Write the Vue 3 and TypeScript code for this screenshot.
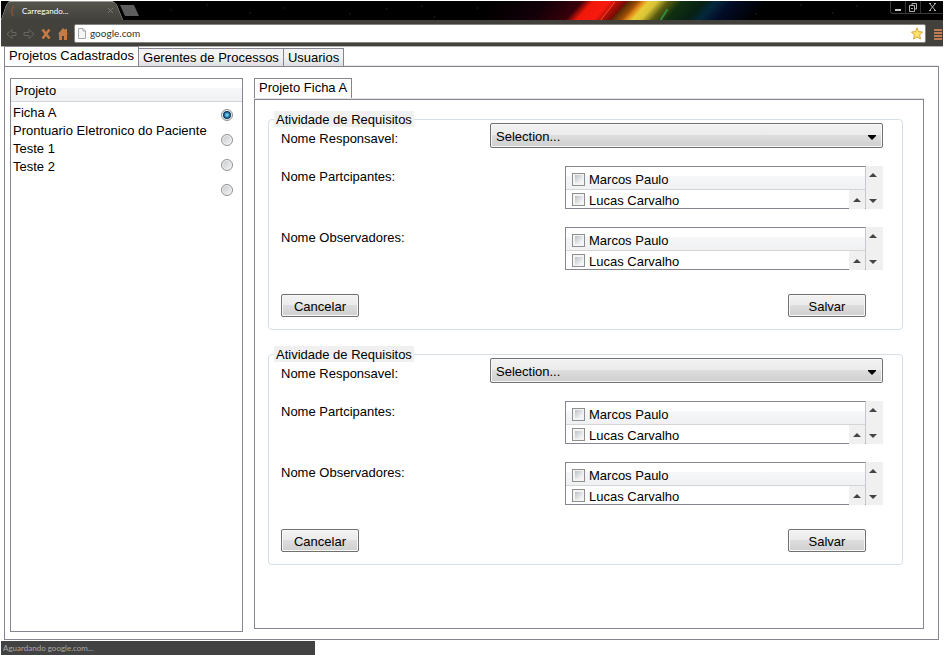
<script setup lang="ts">
import { ref } from 'vue'

const tabs = ['Projetos Cadastrados', 'Gerentes de Processos', 'Usuarios']
const activeTab = ref(0)

const projects = ['Ficha A', 'Prontuario Eletronico do Paciente', 'Teste 1', 'Teste 2']
const selectedProject = ref(0)

const lists = [
  { id: 'part', label: 'Nome Partcipantes:' },
  { id: 'obs', label: 'Nome Observadores:' },
]
const people = ['Marcos Paulo', 'Lucas Carvalho']
const address = ref('google.com')
</script>

<template>
  <div class="window">
    <header class="browser">
      <div class="titlebar">
        <svg class="art" viewBox="0 0 944 19" preserveAspectRatio="none" aria-hidden="true">
          <defs>
            <linearGradient id="glow" gradientUnits="userSpaceOnUse" x1="490" y1="0" x2="770" y2="0" gradientTransform="skewX(-42)">
              <stop offset="0" stop-color="#000" />
              <stop offset=".2" stop-color="#120008" />
              <stop offset=".33" stop-color="#38000a" />
              <stop offset=".37" stop-color="#f01808" />
              <stop offset=".43" stop-color="#f81a10" />
              <stop offset=".46" stop-color="#b01006" />
              <stop offset=".49" stop-color="#780c04" />
              <stop offset=".5" stop-color="#5c3006" />
              <stop offset=".53" stop-color="#9c4c08" />
              <stop offset=".55" stop-color="#e08a18" />
              <stop offset=".57" stop-color="#e8cc38" />
              <stop offset=".6" stop-color="#d8c434" />
              <stop offset=".64" stop-color="#5c5c10" />
              <stop offset=".69" stop-color="#103010" />
              <stop offset=".77" stop-color="#062014" />
              <stop offset=".81" stop-color="#04283c" />
              <stop offset=".87" stop-color="#020c28" />
              <stop offset="1" stop-color="#000" />
            </linearGradient>
          </defs>
          <path d="M490 0H770V19H474Z" fill="url(#glow)" />
          <path d="M615 1L601 19" stroke="#ff4a28" />
          <path d="M668 8L661 19" stroke="#2f8a40" stroke-width="2" />
          <path d="M170 9h1M206 4h1M249 12h1M283 7h1M349 13h1M386 8h1M421 5h1M434 16h1M477 7h1M756 13h1M801 4h1M833 12h1M857 5h1" stroke="#39433f" />
        </svg>
        <div class="page-tab">
          <svg width="8" height="12" viewBox="0 0 8 12" aria-hidden="true"><path d="M4 1Q0 5 3 11" fill="none" stroke="#8a5130" stroke-width="1.5" /></svg>
          <span>Carregando...</span>
          <button class="close" aria-label="Fechar aba">
            <svg width="5" height="5" viewBox="0 0 5 5"><path d="M0 0L5 5M5 0L0 5" stroke="#77756c" /></svg>
          </button>
          <svg class="edge" viewBox="0 0 122 19" aria-hidden="true"><path d="M0 19L5 4Q6 .5 9 .5H111Q114 .5 116 4L122 19" fill="none" stroke="#9a9992" /></svg>
        </div>
        <button class="new-tab" aria-label="Nova aba"></button>
        <div class="controls">
          <button aria-label="Minimizar"><svg width="7" height="9" viewBox="0 0 7 9"><path d="M0 7h6" stroke="#c8c8c8" stroke-width="2" /></svg></button>
          <button aria-label="Restaurar"><svg width="8" height="9" viewBox="0 0 8 9"><path d="M3 2V.5h4.500V6H6M.5 2.500h5v6h-5zM2 5.500h2" fill="none" stroke="#b0b0b0" /></svg></button>
          <button class="wide" aria-label="Fechar"><svg width="7" height="8" viewBox="0 0 7 8"><path d="M1 1L6 7M6 1L1 7M0 .5h2M5 .5h2M0 7.500h2M5 7.500h2" stroke="#b0b0b0" /></svg></button>
        </div>
      </div>
      <div class="toolbar">
        <button aria-label="Voltar"><svg width="12" height="12" viewBox="0 0 12 12"><path d="M6 1.500L1 6L6 10.500V7.500H10V4.500H6Z" fill="none" stroke="#68665e" /></svg></button>
        <button aria-label="Avançar"><svg width="12" height="12" viewBox="0 0 12 12"><path d="M6 1.500L11 6L6 10.500V7.500H1V4.500H6Z" fill="none" stroke="#68665e" /></svg></button>
        <button aria-label="Parar"><svg width="10" height="12" viewBox="0 0 10 12"><path d="M1.500 1.500L8.500 10.500M8.500 1.500L1.500 10.500" stroke="#c87a42" stroke-width="2.500" /></svg></button>
        <button aria-label="Início"><svg width="10" height="12" viewBox="0 0 10 12"><path d="M0 6L5 0L7 2V1H9V5L10 6H9V12H6V8H4V12H1V6Z" fill="#c87a42" /></svg></button>
        <div class="address">
          <svg width="8" height="11" viewBox="0 0 8 11" aria-hidden="true"><path d="M.5.5H5L7.500 3V10.500H.5ZM5 .5V3H7.500" fill="#f6f6f6" stroke="#a9a9a9" /></svg>
          <input v-model="address" type="text" aria-label="Endereço">
          <button aria-label="Favorito"><svg width="12" height="13" viewBox="0 0 12 13"><path d="M6 .8L7.600 4.600L11.500 5L8.600 8L9.500 12L6 10L2.500 12L3.400 8L.5 5L4.400 4.600Z" fill="#fbe36a" stroke="#d9a441" /></svg></button>
        </div>
        <button class="menu" aria-label="Menu"><svg width="8" height="11" viewBox="0 0 8 11"><path d="M0 1h8M0 4h8M0 7h8M0 10h8" stroke="#c07c50" stroke-width="2" /></svg></button>
      </div>
    </header>

    <nav class="tabs">
      <button v-for="(tab, i) in tabs" :key="tab" :class="{ active: i === activeTab }" @click="activeTab = i">{{ tab }}</button>
    </nav>

    <main class="panel">
      <section class="sidebar">
        <h2>Projeto</h2>
        <div class="projects">
          <div class="names">
            <label v-for="(name, i) in projects" :key="name" :for="`project-${i}`">{{ name }}</label>
          </div>
          <div class="radios">
            <input v-for="(name, i) in projects" :id="`project-${i}`" :key="name" v-model="selectedProject" type="radio" name="project" :value="i">
          </div>
        </div>
      </section>

      <section class="detail">
        <nav class="tabs inner"><button class="active">Projeto Ficha A</button></nav>
        <div class="detail-body">
          <fieldset v-for="n in 2" :key="n">
            <legend>Atividade de Requisitos</legend>
            <div class="form">
              <label class="lead" :for="`resp-${n}`">Nome Responsavel:</label>
              <div class="select">
                <select :id="`resp-${n}`"><option>Selection...</option></select>
                <svg width="8" height="5" viewBox="0 0 8 5" aria-hidden="true"><path d="M0 0H8V1L4 5L0 1Z" /></svg>
              </div>
              <template v-for="list in lists" :key="list.id">
                <span :id="`${list.id}-${n}`" class="caption">{{ list.label }}</span>
                <div class="listbox" role="group" :aria-labelledby="`${list.id}-${n}`">
                  <div class="rows">
                    <label v-for="person in people" :key="person"><input type="checkbox"><span>{{ person }}</span></label>
                    <button class="corner" aria-label="Subir"><svg width="8" height="4" viewBox="0 0 8 4"><path d="M0 4L4 0L8 4Z" fill="#444" /></svg></button>
                  </div>
                  <div class="scroll">
                    <button aria-label="Rolar para cima"><svg width="8" height="4" viewBox="0 0 8 4"><path d="M0 4L4 0L8 4Z" fill="#444" /></svg></button>
                    <button aria-label="Rolar para baixo"><svg width="8" height="4" viewBox="0 0 8 4"><path d="M0 0L4 4L8 0Z" fill="#444" /></svg></button>
                  </div>
                </div>
              </template>
            </div>
            <div class="actions">
              <button>Cancelar</button>
              <button>Salvar</button>
            </div>
          </fieldset>
        </div>
      </section>
    </main>

    <footer class="status">Aguardando google.com...</footer>
  </div>
</template>

<style>
body { background: #fff; }
</style>

<style scoped>
* { box-sizing: border-box; }
svg { display: block; flex: none; }
button { font: inherit; color: inherit; padding: 0; border: 0; background: none; }
.window { display: flex; flex-direction: column; min-height: 100vh; font: 13px/16px "Liberation Sans", Arial, sans-serif; color: #000; }

.browser { margin: 1px 1px 0; border-bottom: 1px solid #b5b5b3; }
.titlebar { position: relative; display: flex; height: 19px; background: #000; }
.art { position: absolute; inset: 0; width: 100%; height: 100%; }
.page-tab { position: relative; display: flex; align-items: center; gap: 4px; width: 122px; padding: 0 8px 0 9px; background: linear-gradient(#55544d, #42413c); clip-path: polygon(0 100%, 5px 4px, 8px 0, 112px 0, 116px 4px, 122px 100%); color: #fff; font: 8px/16px Lato, sans-serif; }
.page-tab span { flex: 1; }
.edge { position: absolute; inset: 0; pointer-events: none; }
.close { margin-right: 2px; }
.new-tab { position: relative; width: 19px; height: 11px; margin-top: 4px; margin-left: -3px; background: #5d5d5d; clip-path: polygon(0 0, 14px 0, 100% 100%, 5px 100%); }
.controls { position: relative; display: flex; height: 13px; margin-left: auto; border: 1px solid #3b3b3b; border-top: 0; border-right: 0; border-radius: 0 0 0 3px; }
.controls button { display: grid; place-items: center; width: 15px; border-right: 1px solid #333; }
.controls .wide { width: 22px; border: 0; }
.toolbar { display: flex; align-items: center; gap: 6px; height: 26px; padding: 0 0 0 5px; background: #42413c; }
.toolbar > button { display: grid; place-items: center; width: 11px; height: 20px; margin-top: 2px; }
.address { display: flex; flex: 1; align-items: center; gap: 4px; height: 19px; padding: 0 2px 0 3px; background: #fff; border: 1px solid #85847f; border-radius: 2px; }
.address input { flex: 1; min-width: 0; height: 16px; padding: 0; border: 0; outline: 0; background: none; color: #333; font: 10px/16px Lato, sans-serif; }

.tabs { display: flex; align-items: flex-end; height: 19px; margin: 0 6px 0 4px; box-shadow: inset 0 -1px #e4e4e4; }
.tabs button { height: 18px; padding: 0 4px; border: 1px solid #868690; border-width: 1px 1px 0 0; background: linear-gradient(#f3f3f3 45%, #dedfe1); white-space: nowrap; }
.tabs .active { border-left-width: 1px; background: #fff; }
.tabs > .active { height: 20px; padding-bottom: 2px; }
.panel { display: flex; flex: 1; gap: 11px; margin: 0 5px 0 4px; padding: 11px 14px 7px 5px; border: 1px solid #868690; }
.sidebar { flex: 0 0 233px; border: 1px solid #868690; }
.sidebar h2 { margin: 0; height: 23px; padding: 4px 4px 0; font: inherit; border-bottom: 1px solid #d5d5d5; background: linear-gradient(#fff 40%, #f6f7f8 41%, #f0f1f3); }
.projects { display: flex; justify-content: space-between; padding: 2px 9px 0 2px; }
.names label { display: block; line-height: 18px; }
.radios { display: flex; flex-direction: column; gap: 13px; padding-top: 5px; }
.radios input { appearance: none; width: 12px; height: 12px; margin: 0; border: 1px solid #8e8f8f; border-radius: 50%; background: linear-gradient(135deg, #c4c7ca, #f6f6f6); box-shadow: inset 0 0 0 1px #f4f4f4; }
.radios input:checked { background: radial-gradient(circle at 50% 50%, #6cc8ee 0 1px, #12527c 3px, #0a2c48 4px, #e8eef2 5px); }

.detail { display: flex; flex: 1; flex-direction: column; min-width: 0; margin-bottom: 3px; }
.inner { height: 21px; margin: 0; }
.inner > .active { height: 20px; margin-bottom: 1px; padding: 0 4px 1px; }
.detail-body { display: flex; flex: 1; flex-direction: column; gap: 16px; padding: 11px 20px 0 13px; border: 1px solid #868690; }
fieldset { min-width: 0; margin: 0; padding: 0 19px 12px 12px; border: 1px solid #d5dfe5; border-radius: 4px; }
legend { height: 16px; margin-left: -7px; padding: 0 2px; background: #f0f0f0; line-height: 18px; }
.form { display: grid; grid-template-columns: 209px 75px 1fr; row-gap: 18px; margin-top: -4px; line-height: 22px; }
.lead { align-self: end; line-height: 18px; }
.select { position: relative; grid-column: 2 / 4; }
.select select { appearance: none; display: block; width: 100%; height: 25px; padding: 2px 20px 0 5px; border: 1px solid #707070; border-radius: 2px; background: linear-gradient(#f2f2f2, #ebebeb 48%, #dddddd 50%, #cfcfcf); box-shadow: inset 0 0 0 1px #f8f8f8; font: inherit; color: #000; }
.select svg { position: absolute; right: 7px; top: 12px; pointer-events: none; }
.caption { grid-column: 1 / 3; }
.listbox { display: flex; height: 43px; }
.rows { position: relative; flex: 1; border: 1px solid #868690; border-right-color: #c5c8cc; }
.rows label { display: flex; align-items: center; gap: 4px; height: 19px; padding-left: 6px; }
.rows label:first-child { height: 23px; padding-top: 2px; border-bottom: 1px solid #d5d5d5; background: linear-gradient(#fff 40%, #f6f7f8 41%, #f0f1f3); }
.rows span { padding-top: 2px; }
.rows input { appearance: none; width: 13px; height: 13px; margin: 0; border: 1px solid #8e8f8f; background: linear-gradient(135deg, #bcc2c9, #f4f4f4 80%) center / 8px 8px no-repeat #f4f4f4; }
.corner { position: absolute; right: 0; bottom: -1px; display: grid; place-items: center; width: 16px; height: 19px; background: #f0f0f0; }
.scroll { display: flex; flex-direction: column; justify-content: space-between; width: 17px; padding: 7px 0 6px 3px; background: #f0f0f0; }
.actions { display: flex; justify-content: space-between; margin-top: 24px; padding-right: 17px; }
.actions button { width: 78px; height: 23px; padding-top: 2px; border: 1px solid #707070; border-radius: 2px; background: linear-gradient(#f2f2f2, #ebebeb 48%, #dddddd 50%, #cfcfcf); box-shadow: inset 0 0 0 1px #f8f8f8; }

.status { width: 34%; max-width: 314px; height: 14px; margin: 1px 0 0 1px; padding-left: 2px; background: #424242; color: #a9a9a9; font: 8px/14px Lato, sans-serif; }
</style>
